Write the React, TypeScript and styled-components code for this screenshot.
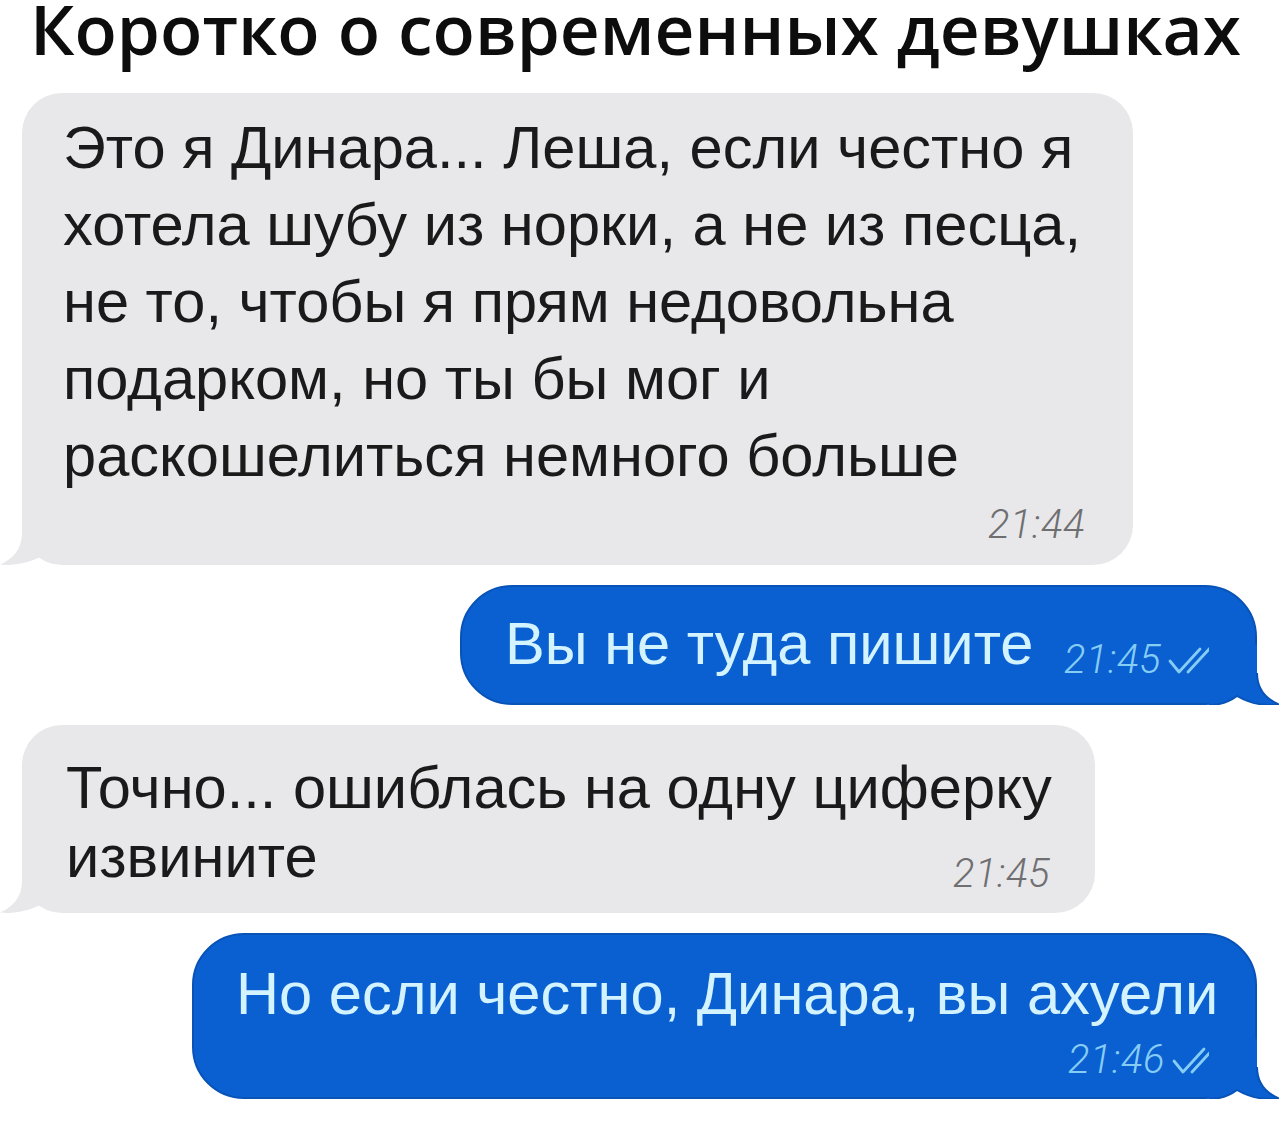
import React from "react";
import styled, { createGlobalStyle } from "styled-components";

const GlobalStyle = createGlobalStyle`
  html, body { margin: 0; padding: 0; background: #ffffff; }
  body { font-family: "Liberation Sans", Arial, sans-serif; }
`;

const Page = styled.div`
  width: 1280px;
  height: 1128px;
  box-sizing: border-box;
  padding: 0 23px 0 22px;
  display: flex;
  flex-direction: column;
  overflow: hidden;
  background: #ffffff;
`;

const Title = styled.h1`
  margin: 0 0 37px 8px;
  font-family: "Open Sans", "Noto Sans", sans-serif;
  font-weight: 600;
  font-size: 69.4px;
  line-height: 56px;
  color: #0d0d0d;
  white-space: nowrap;
`;

const Chat = styled.div`
  display: flex;
  flex-direction: column;
  gap: 20px;
`;

type Side = "in" | "out";

const Bubble = styled.div<{ $side: Side; $width: number; $pad: string }>`
  position: relative;
  box-sizing: border-box;
  width: ${(p) => p.$width}px;
  align-self: ${(p) => (p.$side === "in" ? "flex-start" : "flex-end")};
  padding: ${(p) => p.$pad};
  border-radius: ${(p) => (p.$side === "in" ? "40px" : "52px")};
  background: ${(p) => (p.$side === "in" ? "#e8e8ea" : "#0a60d0")};
  border: ${(p) => (p.$side === "in" ? "none" : "2px solid #0853b8")};
  color: ${(p) => (p.$side === "in" ? "#1a1a1a" : "#d2f3ff")};
`;

const Row = styled.div<{ $stack?: boolean }>`
  display: flex;
  flex-direction: ${(p) => (p.$stack ? "column" : "row")};
  align-items: flex-end;
  justify-content: space-between;
`;

const Text = styled.div<{ $lh?: number }>`
  align-self: flex-start;
  font-family: "Liberation Sans", Arial, sans-serif;
  font-size: 59.6px;
  line-height: ${(p) => p.$lh ?? 77}px;
  white-space: nowrap;
`;

const LastLine = styled.div`
  align-self: stretch;
  display: flex;
  align-items: flex-end;
  justify-content: space-between;
`;

const Meta = styled.div<{ $side: Side; $mt?: number; $mb?: number }>`
  display: flex;
  align-items: center;
  gap: 6px;
  margin-top: ${(p) => p.$mt ?? 0}px;
  margin-bottom: ${(p) => p.$mb ?? 0}px;
  font-family: Roboto, "Liberation Sans", sans-serif;
  font-style: italic;
  font-weight: 300;
  font-size: 40px;
  letter-spacing: 0.5px;
  line-height: 44px;
  color: ${(p) => (p.$side === "in" ? "#6f6f72" : "#86cdf5")};
`;

const TailSvg = styled.svg<{ $side: Side }>`
  position: absolute;
  bottom: ${(p) => (p.$side === "in" ? "0" : "-2px")};
  ${(p) => (p.$side === "in" ? "left: -22px;" : "right: -24px;")}
  width: 70px;
  height: 60px;
  transform: ${(p) => (p.$side === "in" ? "none" : "scaleX(-1)")};
  pointer-events: none;
`;

const Tail = ({ side }: { side: Side }) => (
  <TailSvg $side={side} viewBox="0 0 70 60">
    <path
      d="M22 0 L22 28 C22 44 13 54 0 59.5 C14 61 30 58 42 51 C50 57 58 60 70 60 L70 0 Z"
      fill={side === "in" ? "#e8e8ea" : "#0a60d0"}
    />
    {side === "out" && (
      <path
        d="M22 28 C22 44 13 54 0 59.5 C14 61 30 58 42 51 C50 57 58 60 70 60"
        fill="none"
        stroke="#0853b8"
        strokeWidth="2"
      />
    )}
  </TailSvg>
);

const Checks = () => (
  <svg width="48" height="32" viewBox="0 0 48 32">
    <path
      d="M3 17 L12 28 L33 5 M21 28 L44 3"
      fill="none"
      stroke="#86cdf5"
      strokeWidth="2.8"
      strokeLinecap="round"
      strokeLinejoin="round"
    />
  </svg>
);

export default function App() {
  return (
    <>
      <GlobalStyle />
      <Page>
        <Title>Коротко о современных девушках</Title>
        <Chat>
          <Bubble $side="in" $width={1111} $pad="16px 48px 18px 41px">
            <Row $stack>
              <Text>
                Это я Динара... Леша, если честно я
                <br />
                хотела шубу из норки, а не из песца,
                <br />
                не то, чтобы я прям недовольна
                <br />
                подарком, но ты бы мог и
                <br />
                раскошелиться немного больше
              </Text>
              <Meta $side="in" $mt={9}>
                21:44
              </Meta>
            </Row>
            <Tail side="in" />
          </Bubble>

          <Bubble $side="out" $width={797} $pad="18px 40px 21px 43px">
            <Row>
              <Text>Вы не туда пишите</Text>
              <Meta $side="out">
                21:45
                <Checks />
              </Meta>
            </Row>
            <Tail side="out" />
          </Bubble>

          <Bubble $side="in" $width={1073} $pad="28px 45px 22px 44px">
            <Row $stack>
              <Text $lh={69}>Точно... ошиблась на одну циферку</Text>
              <LastLine>
                <Text $lh={69}>извините</Text>
                <Meta $side="in" $mb={-5}>
                  21:45
                </Meta>
              </LastLine>
            </Row>
            <Tail side="in" />
          </Bubble>

          <Bubble $side="out" $width={1065} $pad="20px 36px 15px 42px">
            <Row $stack>
              <Text>Но если честно, Динара, вы ахуели</Text>
              <Meta $side="out" $mt={6}>
                21:46
                <Checks />
              </Meta>
            </Row>
            <Tail side="out" />
          </Bubble>
        </Chat>
      </Page>
    </>
  );
}
